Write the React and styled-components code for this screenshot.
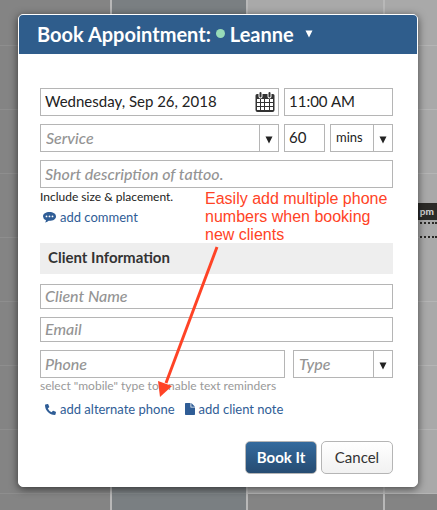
import { useState } from "react";
import styled, { createGlobalStyle } from "styled-components";
import { FaPhoneAlt } from "react-icons/fa";

const GlobalStyle = createGlobalStyle`
  * {
    box-sizing: border-box;
  }

  body {
    margin: 0;
    background-color: #aaa;
    font-family: Lato, "Open Sans", sans-serif;
  }

  input,
  select,
  button {
    font-family: inherit;
  }
`;

const Page = styled.div`
  position: relative;
  min-height: 100vh;
  padding: 14px 19px 23px 18px;
  overflow: hidden;
`;

const Calendar = styled.div`
  position: absolute;
  inset: 0;
  display: grid;
  grid-template-columns: 110px 136px 137px 1fr;
`;

const Day = styled.div`
  display: grid;
  grid-template-rows: 46px repeat(7, 64px) 1fr;
  border-left: ${({ $first }) => ($first ? "none" : "2px solid #b8b8b8")};
  background-color: ${({ $color }) => $color};
`;

const Slot = styled.div`
  border-bottom: 1px solid ${({ $line }) => $line};
  background-color: ${({ $closed }) => ($closed ? "#848484" : "transparent")};
`;

const Booking = styled.div`
  position: absolute;
  top: 203px;
  right: 0;
  width: 40px;
  border-bottom: 2px dotted #2b2a27;
  color: #ccc;
  font-size: 10px;
  font-weight: 900;
  line-height: 17px;
  text-align: right;
`;

const BookingTime = styled.div`
  margin-bottom: 16px;
  padding-right: 3px;
  background-color: #2b2a27;
`;

const BookingLine = styled.div`
  position: absolute;
  top: 19px;
  left: 0;
  right: 0;
  border-top: 2px dotted #2b2a27;
`;

const Dialog = styled.form`
  position: relative;
  border: 1px solid #fff;
  border-radius: 5px;
  background-color: #fff;
  box-shadow: 0 2px 9px rgba(0, 0, 0, 0.6);
`;

const Header = styled.header`
  display: flex;
  align-items: center;
  gap: 5px;
  height: 39px;
  padding: 0 18px 2px;
  border-radius: 4px 4px 0 0;
  background-color: #2f5d8c;
  color: #fff;
`;

const Title = styled.h1`
  margin: 0;
  font-size: 20px;
  font-weight: 700;
  line-height: 24px;
  white-space: nowrap;
`;

const ArtistButton = styled.button`
  display: flex;
  align-items: center;
  gap: 5px;
  padding: 0;
  border: none;
  background: none;
  color: inherit;
  font-size: 20px;
  font-weight: 700;
  line-height: 24px;
`;

const Dot = styled.span`
  width: 9px;
  height: 9px;
  border-radius: 50%;
  background-color: #98dcb8;
`;

const Caret = styled.svg`
  width: 8px;
  height: 8px;
  margin-left: 6px;
  fill: currentColor;
`;

const Body = styled.div`
  display: flex;
  flex-direction: column;
  gap: 8px;
  padding: 34px 24px 12px 21px;
`;

const Row = styled.div`
  display: grid;
  grid-template-columns: ${({ $columns }) => $columns || "1fr"};
  gap: ${({ $gap }) => $gap || 5}px;
`;

const Field = styled.div`
  display: flex;
  align-items: center;
  min-width: 0;
  height: ${({ $short }) => ($short ? 25 : 28)}px;
  border: 1px solid #b5b5b5;
  background-color: #fff;
`;

const Input = styled.input`
  flex: 1;
  min-width: 0;
  height: 100%;
  padding: 0 4px 2px;
  border: none;
  outline: none;
  background: none;
  color: #222;
  font-size: 15px;

  &:placeholder-shown {
    font-size: 16px;
  }

  &::placeholder {
    color: #949494;
    font-style: italic;
    font-weight: 500;
    opacity: 1;
  }
`;

const IconButton = styled.button`
  display: flex;
  padding: 0 3px 0 0;
  border: none;
  background: none;
`;

const SelectField = styled(Field)`
  display: grid;
  grid-template-columns: 1fr 19px;
  grid-template-rows: 100%;
`;

const Select = styled.select`
  grid-area: 1 / 1 / 2 / 3;
  width: 100%;
  height: 100%;
  padding: 0 5px 2px;
  border: none;
  outline: none;
  appearance: none;
  background: none;
  color: ${({ $empty }) => ($empty ? "#949494" : "#222")};
  font-size: ${({ $empty }) => ($empty ? 16 : 13)}px;
  font-style: ${({ $empty }) => ($empty ? "italic" : "normal")};
  font-weight: ${({ $empty }) => ($empty ? 500 : 400)};
`;

const SelectArrow = styled.span`
  grid-area: 1 / 2;
  display: flex;
  align-items: center;
  justify-content: center;
  height: 100%;
  padding-top: 4px;
  border-left: 1px solid #b5b5b5;
  color: #222;
  pointer-events: none;

  ${Caret} {
    margin: 0;
  }
`;

const Help = styled.p`
  margin: ${({ $muted }) => ($muted ? "-8px 0 0" : "-7px 0 0")};
  color: ${({ $muted }) => ($muted ? "#999" : "#222")};
  font-size: 12px;
  line-height: 16px;
`;

const Links = styled.nav`
  display: flex;
  gap: 10px;
  margin-top: ${({ $top }) => $top || 0}px;
  padding-left: ${({ $indent }) => $indent}px;
`;

const ActionLink = styled.a`
  display: flex;
  align-items: center;
  gap: 4px;
  color: #2f5d96;
  font-size: 13px;
  line-height: 18px;
  text-decoration: none;
  white-space: nowrap;
`;

const SectionTitle = styled.h2`
  margin: 9px 0 2px;
  padding: 0 8px 2px;
  background-color: #eee;
  color: #333;
  font-size: 15px;
  font-weight: 700;
  line-height: 29px;
`;

const Footer = styled.footer`
  display: flex;
  justify-content: flex-end;
  gap: 4px;
  margin-top: 15px;
`;

const Button = styled.button`
  width: 72px;
  height: 33px;
  padding: 0 0 2px;
  border: 1px solid #b5b5b5;
  border-radius: 5px;
  background: ${({ $primary }) =>
    $primary
      ? "linear-gradient(#346a9d, #264c72)"
      : "linear-gradient(#fff, #f1f1f1)"};
  color: ${({ $primary }) => ($primary ? "#fff" : "#333")};
  font-size: 15px;
  font-weight: ${({ $primary }) => ($primary ? 700 : 400)};
`;

const Callout = styled.div`
  position: absolute;
  top: 175px;
  left: 186px;
  width: 190px;
  color: #ff4326;
  font-family: "Liberation Sans", sans-serif;
  font-size: 16px;
  line-height: 18px;
  pointer-events: none;
`;

const CalloutArrow = styled.svg`
  position: absolute;
  top: 231px;
  left: 136px;
  width: 70px;
  height: 154px;
  pointer-events: none;
`;

const DownCaret = () => (
  <Caret viewBox="0 0 8 8" aria-hidden="true">
    <path d="M0.5 0.5h7L4 7.5z" />
  </Caret>
);

const CalendarIcon = () => (
  <svg width="20" height="20" viewBox="0 0 20 20" aria-hidden="true">
    <path
      fill="#333"
      d="M2 2h1.500v2.500a2 2 0 0 0 4 0V2h5v2.500a2 2 0 0 0 4 0V2H18q1.500 0 1.500 1.500V18q0 2-2 2h-15q-2 0-2-2V3.500Q.5 2 2 2z"
    />
    <rect x="4.500" y="0" width="2" height="5.500" rx="1" fill="#333" />
    <rect x="13.500" y="0" width="2" height="5.500" rx="1" fill="#333" />
    <path
      fill="#fff"
      d="M2 7h3v3H2zM6 7h3v3H6zM10 7h4v3h-4zM15 7h3v3h-3zM2 11h3v3H2zM6 11h3v3H6zM10 11h4v3h-4zM15 11h3v3h-3zM2 15h3v3H2zM6 15h3v3H6zM10 15h4v3h-4zM15 15h3v3h-3z"
    />
  </svg>
);

const CommentIcon = () => (
  <svg width="13" height="12" viewBox="0 0 13 12" aria-hidden="true">
    <path
      fill="#2f5d96"
      d="M6.500 1C10 1 13 2.800 13 5.400S10 9.800 6.500 9.800L5.700 9.700Q4 11.200 1.800 11.500 3 10.400 3 9.200 0 7.800 0 5.400C0 2.800 3 1 6.500 1z"
    />
    <circle cx="3.500" cy="5.400" r="0.900" fill="#fff" />
    <circle cx="6.500" cy="5.400" r="0.900" fill="#fff" />
    <circle cx="9.500" cy="5.400" r="0.900" fill="#fff" />
  </svg>
);

const NoteIcon = () => (
  <svg width="10" height="12" viewBox="0 0 10 12" aria-hidden="true">
    <path
      fill="#2f5d96"
      d="M.7 0H5.500V4.500H10V11.300q0 .7-.7.700H.7Q0 12 0 11.300V.7Q0 0 .7 0zM6.300 0L10 3.700H6.300z"
    />
  </svg>
);

const Dropdown = ({ label, placeholder, options }) => {
  const [value, setValue] = useState(placeholder ? "" : options[0]);

  return (
    <SelectField>
      <Select
        aria-label={label}
        $empty={!value}
        value={value}
        onChange={(e) => setValue(e.target.value)}
      >
        {placeholder && <option value="">{placeholder}</option>}
        {options.map((option) => (
          <option key={option}>{option}</option>
        ))}
      </Select>
      <SelectArrow>
        <DownCaret />
      </SelectArrow>
    </SelectField>
  );
};

const TextField = ({ label, short, children, ...props }) => (
  <Field $short={short}>
    <Input aria-label={label} placeholder={label} {...props} />
    {children}
  </Field>
);

const days = [
  { color: "#848484", line: "#8e8e8e", first: true },
  { color: "#7a7f82", line: "#83888a" },
  { color: "#a9a9a9", line: "#b5b5b5", closesEarly: true },
  { color: "#a9a9a9", line: "#b5b5b5", closesEarly: true },
];

const App = () => {
  return (
    <Page>
      <GlobalStyle />
      <Calendar>
        {days.map(({ color, line, first, closesEarly }, index) => (
          <Day key={index} $color={color} $first={first}>
            {Array.from({ length: 9 }, (_, slot) => (
              <Slot
                key={slot}
                $line={slot === 8 ? "transparent" : line}
                $closed={closesEarly && slot === 8}
              />
            ))}
          </Day>
        ))}
        <Booking>
          <BookingTime>pm</BookingTime>
          <BookingLine />
        </Booking>
      </Calendar>

      <Dialog onSubmit={(e) => e.preventDefault()}>
        <Header>
          <Title>Book Appointment:</Title>
          <ArtistButton type="button">
            <Dot />
            Leanne
            <DownCaret />
          </ArtistButton>
        </Header>
        <Body>
          <Row $columns="1fr 109px">
            <TextField label="Date" defaultValue="Wednesday, Sep 26, 2018">
              <IconButton type="button" aria-label="Open calendar">
                <CalendarIcon />
              </IconButton>
            </TextField>
            <TextField label="Time" defaultValue="11:00 AM" />
          </Row>
          <Row $columns="1fr 41px 63px">
            <Dropdown
              label="Service"
              placeholder="Service"
              options={["Tattoo", "Consultation"]}
            />
            <TextField label="Duration" defaultValue="60" />
            <Dropdown label="Duration unit" options={["mins", "hours"]} />
          </Row>
          <TextField label="Short description of tattoo." />
          <Help>Include size &amp; placement.</Help>
          <Links $indent={3} $top={-5}>
            <ActionLink href="#comment">
              <CommentIcon />
              add comment
            </ActionLink>
          </Links>
          <SectionTitle>Client Information</SectionTitle>
          <TextField label="Client Name" short />
          <TextField label="Email" short />
          <Row $columns="1fr 100px" $gap={8}>
            <TextField label="Phone" type="tel" />
            <Dropdown
              label="Phone type"
              placeholder="Type"
              options={["mobile", "home", "work"]}
            />
          </Row>
          <Help $muted>select "mobile" type to enable text reminders</Help>
          <Links $indent={5} $top={-2}>
            <ActionLink href="#phone">
              <FaPhoneAlt size={11} />
              add alternate phone
            </ActionLink>
            <ActionLink href="#note">
              <NoteIcon />
              add client note
            </ActionLink>
          </Links>
          <Footer>
            <Button type="submit" $primary>
              Book It
            </Button>
            <Button type="button">Cancel</Button>
          </Footer>
        </Body>

        <Callout>Easily add multiple phone numbers when booking new clients</Callout>
        <CalloutArrow viewBox="0 0 70 154" aria-hidden="true">
          <path d="M62 1L11 137" stroke="#ff4326" strokeWidth="3" />
          <path d="M5 151L3 135 17 140z" fill="#ff4326" />
        </CalloutArrow>
      </Dialog>
    </Page>
  );
};

export default App;
